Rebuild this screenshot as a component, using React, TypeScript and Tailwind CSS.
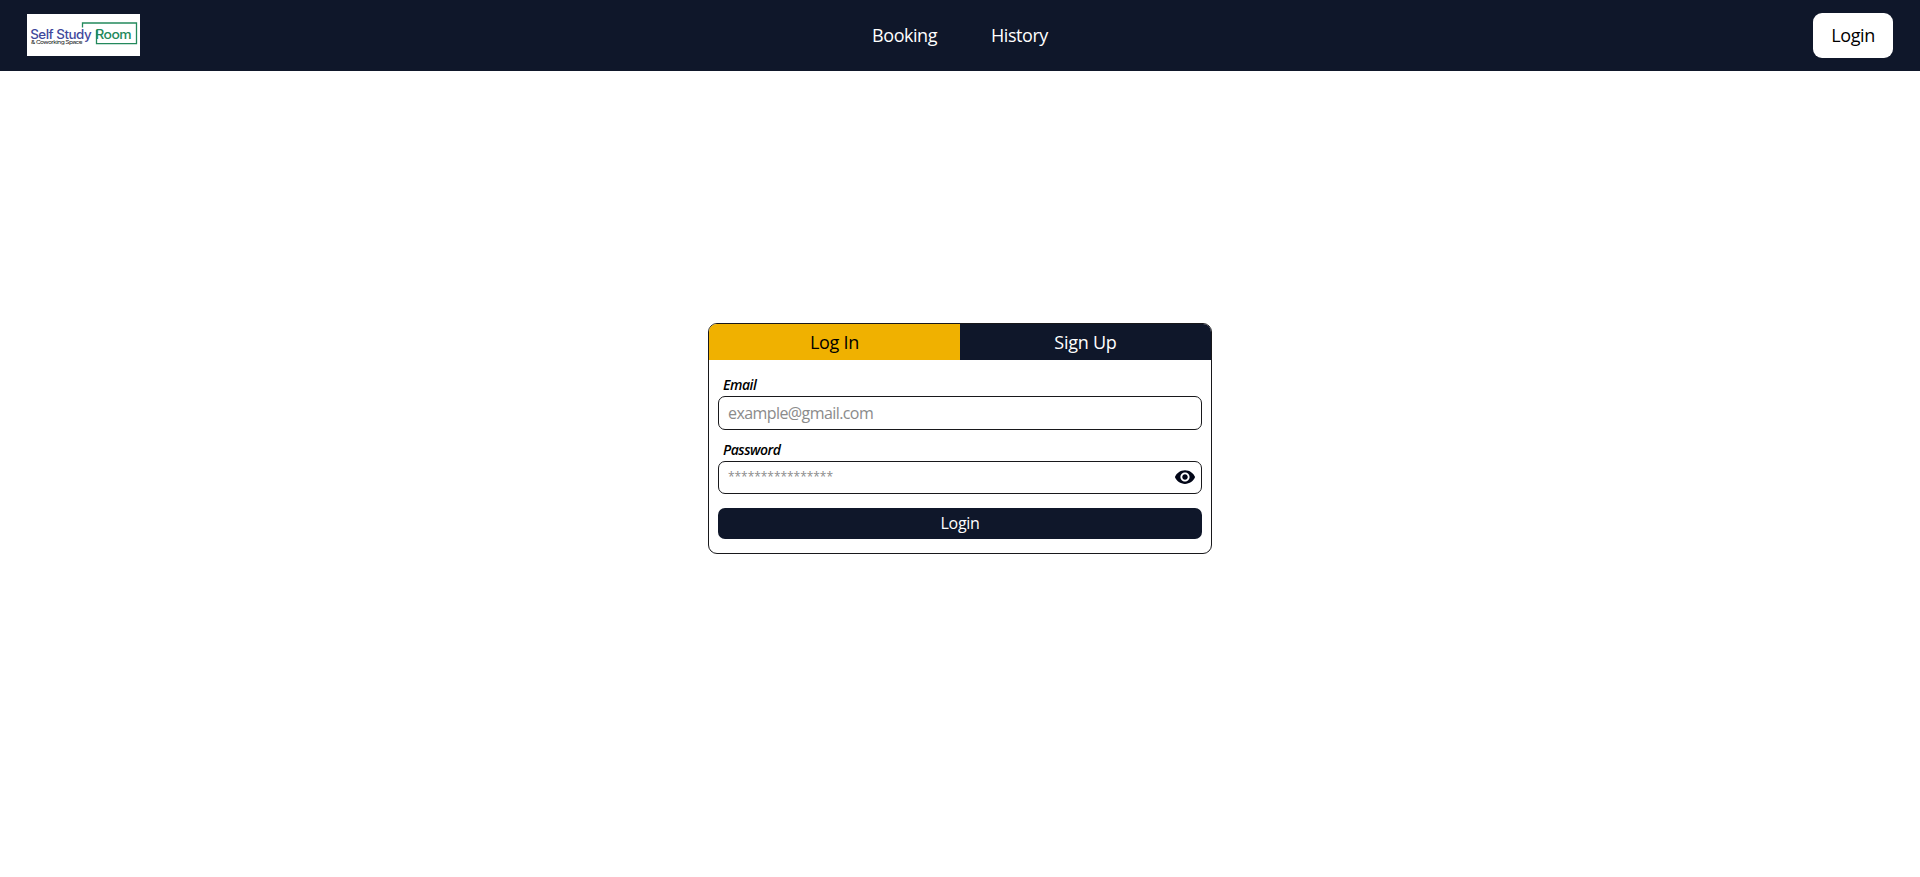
import { useState } from "react";

function Logo() {
  return (
    <svg width="113" height="42" viewBox="0 0 113 42" className="mb-px block bg-white" role="img" aria-label="Self Study Room">
      <path d="M55.5 13.5V9h54v20.7h-40V16" fill="none" stroke="#23895c" strokeWidth="1.3" />
      <g fontFamily="Inter, sans-serif" fontWeight="500">
        <text x="3.2" y="24.6" fontSize="12.6" fill="#3f489c" textLength="61" lengthAdjust="spacingAndGlyphs">Self Study</text>
        <text x="68.2" y="24.6" fontSize="12.6" fill="#23895c" textLength="36" lengthAdjust="spacingAndGlyphs">Room</text>
        <text x="4" y="30.4" fontSize="5" fontWeight="400" fill="#222" textLength="51" lengthAdjust="spacingAndGlyphs">&amp; Coworking Space</text>
      </g>
    </svg>
  );
}

function EyeIcon() {
  return (
    <svg width="22" height="22" viewBox="0 0 24 24" fill="#020617" className="mb-px">
      <path d="M12 4.5C7 4.5 2.73 7.61 1 12c1.73 4.39 6 7.5 11 7.5s9.27-3.11 11-7.5c-1.73-4.39-6-7.5-11-7.5zM12 17c-2.76 0-5-2.24-5-5s2.24-5 5-5 5 2.24 5 5-2.24 5-5 5zm0-8c-1.66 0-3 1.34-3 3s1.34 3 3 3 3-1.34 3-3-1.34-3-3-3z" />
    </svg>
  );
}

export default function App() {
  const [visible, setVisible] = useState(false);
  return (
    <div className="flex h-screen flex-col bg-white font-['Open_Sans',sans-serif] text-[18px] tracking-[-0.45px] text-black">
      <header className="grid h-[71px] shrink-0 grid-cols-3 items-center bg-[#0f172a] px-[27px]">
        <Logo />
        <nav className="flex justify-center gap-[54px] text-white">
          <a href="#booking">Booking</a>
          <a href="#history">History</a>
        </nav>
        <button className="h-[45px] w-20 justify-self-end rounded-[9px] bg-white tracking-[-0.4px]">Login</button>
      </header>
      <main className="flex flex-1 justify-center pt-[252px]">
        <section className="h-[231px] w-[504px] overflow-hidden rounded-[9px] border border-[#18181b]">
          <div className="grid h-9 grid-cols-2">
            <button className="bg-[#f0b100] pt-px tracking-[-0.25px]">Log In</button>
            <button className="bg-[#0f172a] pt-px tracking-[-0.25px] text-white">Sign Up</button>
          </div>
          <form className="flex flex-col px-[9px] pt-[14px]" onSubmit={(e) => e.preventDefault()}>
            <label htmlFor="email" className="h-[22px] pl-[5px] text-[14px] leading-[22px] font-semibold italic tracking-[-0.45px]">Email</label>
            <input id="email" type="email" placeholder="example@gmail.com" className="h-[34px] rounded-[7px] border border-[#18181b] px-[9px] text-[16px] tracking-[-0.58px] outline-none placeholder:text-[#8b8b8b]" />
            <label htmlFor="password" className="mt-[9px] h-[22px] pl-[5px] text-[14px] leading-[22px] font-semibold italic tracking-[-0.5px]">Password</label>
            <div className="flex h-[33px] items-center rounded-[7px] border border-[#18181b] pr-[5px] pl-[9px]">
              <input id="password" type={visible ? "text" : "password"} placeholder="****************" className="min-w-0 flex-1 pb-px text-[12px] tracking-[-0.05px] outline-none placeholder:text-[#8b8b8b]" />
              <button type="button" aria-label="Show password" onClick={() => setVisible(!visible)}><EyeIcon /></button>
            </div>
            <button className="mt-[14px] h-[31px] rounded-[7px] bg-[#0f172a] pb-0.5 text-[16px] tracking-[-0.35px] text-white">Login</button>
          </form>
        </section>
      </main>
    </div>
  );
}
